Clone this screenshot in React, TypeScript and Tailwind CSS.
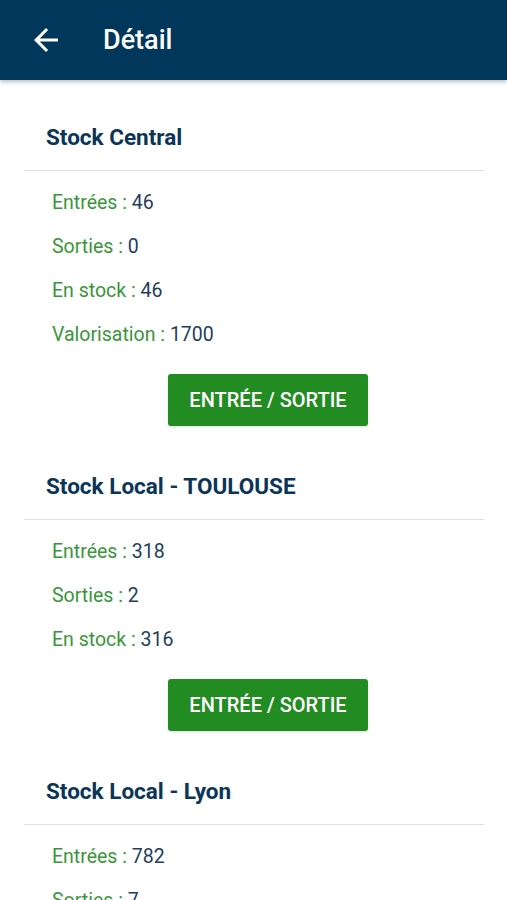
import React from 'react';

interface StockSection {
  name: string;
  rows: { label: string; value: string }[];
}

const sections: StockSection[] = [
  {
    name: 'Stock Central',
    rows: [
      { label: 'Entrées', value: '46' },
      { label: 'Sorties', value: '0' },
      { label: 'En stock', value: '46' },
      { label: 'Valorisation', value: '1700' },
    ],
  },
  {
    name: 'Stock Local - TOULOUSE',
    rows: [
      { label: 'Entrées', value: '318' },
      { label: 'Sorties', value: '2' },
      { label: 'En stock', value: '316' },
    ],
  },
  {
    name: 'Stock Local - Lyon',
    rows: [
      { label: 'Entrées', value: '782' },
      { label: 'Sorties', value: '7' },
    ],
  },
];

function Section({ section }: { section: StockSection }) {
  return (
    <div className="flex flex-col">
      <h2 className="h-[34px] pl-[46px] text-[22.5px] leading-[34px] font-bold text-[#0b3558]">
        {section.name}
      </h2>
      <div className="ml-[24px] mr-[23px] mt-[16px] border-t border-[#e0e0e0]" />
      <div className="flex flex-col pt-[10px] pl-[52px]">
        {section.rows.map((r) => (
          <div key={r.label} className="h-[44px] text-[19.5px] leading-[44px]">
            <span className="text-[#3a963a]">{r.label} : </span>
            <span className="text-[#1f3d5c]">{r.value}</span>
          </div>
        ))}
      </div>
      <div className="flex mt-[17px] pl-[168px]">
        <button
          type="button"
          className="w-[200px] h-[52px] rounded-[3px] bg-[#228b22] text-white text-[20px] font-medium shadow-sm"
        >
          ENTRÉE / SORTIE
        </button>
      </div>
    </div>
  );
}

export default function App() {
  return (
    <div className="w-[507px] h-[900px] overflow-hidden bg-white font-['Roboto',sans-serif]">
      <header className="relative z-10 flex items-center h-[80px] bg-[#00375a] shadow-[0_2px_4px_rgba(0,0,0,0.25)]">
        <svg className="ml-[28px] w-[36px] h-[36px]" viewBox="0 0 24 24" fill="white">
          <path d="M20 11H7.83l5.59-5.59L12 4l-8 8 8 8 1.41-1.41L7.83 13H20v-2z" />
        </svg>
        <h1 className="ml-[39px] text-[27px] font-medium text-white">Détail</h1>
      </header>
      <main className="flex flex-col gap-[43px] pt-[40px]">
        {sections.map((s) => (
          <Section key={s.name} section={s} />
        ))}
      </main>
    </div>
  );
}
